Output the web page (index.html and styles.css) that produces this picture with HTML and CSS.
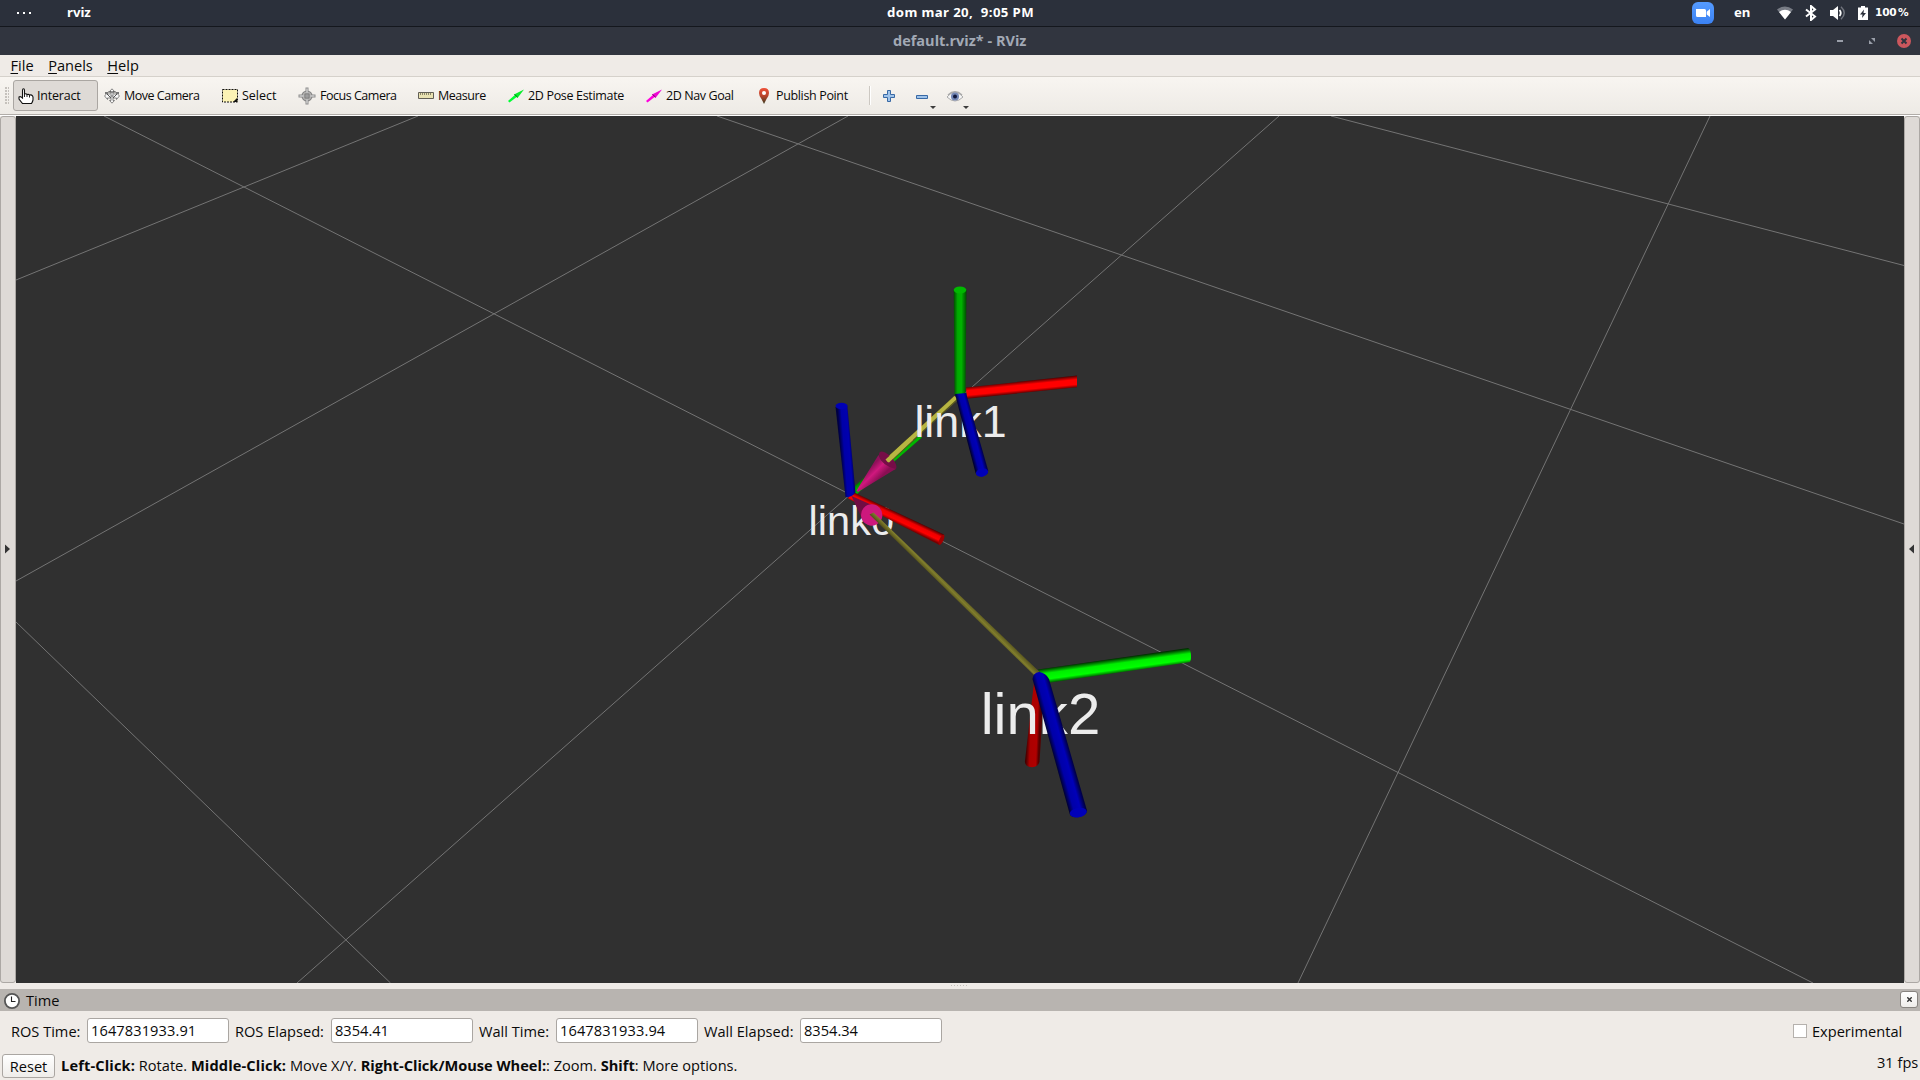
FILE: index.html
```
<!DOCTYPE html>
<html lang="en">
<head>
<meta charset="utf-8">
<title>default.rviz* - RViz</title>
<link rel="stylesheet" href="styles.css">
</head>
<body>
<header class="topbar">
  <div class="top-left"><span class="dots"><i></i><i></i><i></i></span><span class="app">rviz</span></div>
  <div class="clock">dom mar 20,&nbsp; 9:05 PM</div>
  <div class="tray">
    <svg class="zoom-app" width="22" height="22" viewBox="0 0 22 22"><defs><linearGradient id="zm" x2="0" y2="1"><stop stop-color="#559bff"/><stop offset="1" stop-color="#3b82f4"/></linearGradient></defs><rect width="22" height="22" rx="6" fill="url(#zm)"/><path d="M4 7h8.500q1.500 0 1.500 1.500V15H5.500Q4 15 4 13.500zM14.700 9.700L18 7v8l-3.300-2.500z" fill="#fff"/></svg>
    <span class="lang">en</span>
    <svg class="wifi" width="16" height="14" viewBox="0 0 16 14"><path d="M0 3.500Q8-2.500 16 3.500L8 13.500z" fill="#777b84"/><path d="M2 6Q8 1.500 14 6L8 13.500z" fill="#fff"/></svg>
    <svg class="bt" width="12" height="16" viewBox="0 0 12 16"><path d="M1 4.500l9 7L6 15V1l4 3.500-9 7" fill="none" stroke="#fff" stroke-width="2"/></svg>
    <svg class="vol" width="16" height="14" viewBox="0 0 16 14"><path d="M0 4h3l5-4v14l-5-4H0z" fill="#fff"/><path d="M9.500 4q2.500 3 0 6" fill="none" stroke="#fff" stroke-width="1.800"/><path d="M11 .8q6.500 6.200 0 12.400" fill="none" stroke="#70747d" stroke-width="1.500"/></svg>
    <svg class="bat" width="10" height="14" viewBox="0 0 10 14"><path d="M3 0h4v1.500h3V14H0V1.500h3z" fill="#fff"/><path d="M6 3.500L2 8.500h2.500L4 12l4-5H5.500z" fill="#2b303b"/></svg>
    <span class="percent">100 %</span>
  </div>
</header>
<div class="titlebar">
  <div></div>
  <div class="title">default.rviz* - RViz</div>
  <div class="controls">
    <svg width="6" height="14" viewBox="0 0 6 14"><path d="M0 6h6v2H0z" fill="#9a9fa9"/></svg>
    <svg width="6" height="14" viewBox="0 0 6 14"><path d="M2 4h4v4zM0 6l4 4H0z" fill="#9a9fa9"/></svg>
    <svg width="14" height="14" viewBox="0 0 14 14"><circle cx="7" cy="7" r="7" fill="#cc575d"/><path d="M4.500 4.500l5 5m0-5l-5 5" stroke="#2f343f" stroke-width="2"/></svg>
  </div>
</div>
<nav class="menubar"><span><u>F</u>ile</span><span><u>P</u>anels</span><span><u>H</u>elp</span></nav>
<div class="toolbar">
  <span class="grip"></span>
  <div class="tool interact active"><svg width="16" height="16" viewBox="0 0 16 16"><path d="M4.500 10V2.500q0-1.800 1-1.800t1 1.800V6q1.800-.8 2.500.5 1.800-.5 2.500.5 2-.5 3 .8L15 9v3q-.5 2-1.500 3.500H4.500L1 11V9q1.500-1 3.500 1z" fill="#fff" stroke="#111" stroke-width="1.100"/><path d="M6.500 6v3M9 6.500V9M11.500 7v2.500" stroke="#222"/></svg><span>Interact</span></div>
  <div class="tool move"><svg width="16" height="16" viewBox="0 0 16 16"><path d="M8 .8L5.500 3.500H7V6H3.500V4.500L.6 8l2.900 3.500V10H7v2.500H5.500L8 15.200l2.500-2.700H9V10h3.500v1.500L15.400 8l-2.900-3.500V6H9V3.500h1.500z" fill="#f8f8f8" stroke="#777" stroke-width=".9"/><path d="M2 5l5 5M14 5l-5 5M4 4h8" stroke="#444" stroke-width=".9"/><circle cx="8" cy="8" r="1.800" fill="#999"/><path d="M1 4h3v2H1zm11 0h3v2h-3z" fill="#777"/></svg><span>Move Camera</span></div>
  <div class="tool select"><svg width="16" height="14" viewBox="0 0 16 14"><path d="M.5.5h15v12.500H.5z" fill="#fcf3b5" stroke="#111" stroke-dasharray="2 1"/><path d="M15 9v4h-4z" fill="#111"/></svg><span>Select</span></div>
  <div class="tool focus"><svg width="18" height="18" viewBox="0 0 18 18"><circle cx="9" cy="9" r="4.800" fill="none" stroke="#888" stroke-width="1.600"/><path d="M9 .5v17M.5 9h17" stroke="#8c8c8c" stroke-width="3"/><path d="M9 1.500v15M1.500 9h15" stroke="#eee"/><path d="M6 7h6M6 9h6M6 11h6M7 6v6M9 6v6M11 6v6" stroke="#777" stroke-width=".7"/></svg><span>Focus Camera</span></div>
  <div class="tool measure"><svg width="16" height="7" viewBox="0 0 16 7"><path d="M.5.5h15v6H.5z" fill="#e9e2b2" stroke="#625f55"/><path d="M2.500 1v2M4.500 1v2M6.500 1v2M8.500 1v2M10.500 1v2M12.500 1v2" stroke="#8a8569"/></svg><span>Measure</span></div>
  <div class="tool pose"><svg width="16" height="14" viewBox="0 0 16 14"><path d="M0 12L8 5l2 2-8.500 6.500z" fill="#0f3"/><path d="M6 5.500L16 .5 9.500 9z" fill="#08ed2c"/><path d="M6.500 5.500l3 2.500" stroke="#067318"/></svg><span>2D Pose Estimate</span></div>
  <div class="tool nav"><svg width="16" height="14" viewBox="0 0 16 14"><path d="M0 12L8 5l2 2-8.500 6.500z" fill="#f0d"/><path d="M6 5.500L16 .5 9.500 9z" fill="#ed08d2"/><path d="M6.500 5.500l3 2.500" stroke="#780668"/></svg><span>2D Nav Goal</span></div>
  <div class="tool publish"><svg width="16" height="16" viewBox="0 0 16 16"><defs><linearGradient id="pin" x2="0" y2="1"><stop stop-color="#ef5138"/><stop offset=".5" stop-color="#b8442c"/><stop offset="1" stop-color="#383c20"/></linearGradient></defs><path d="M8 0q5 0 5 5 0 3-2.500 6L8 16 5.500 11Q3 8 3 5q0-5 5-5z" fill="url(#pin)"/><circle cx="8" cy="5" r="2" fill="#fff"/></svg><span>Publish Point</span></div>
  <span class="sep"></span>
  <svg class="plus" width="12" height="12" viewBox="0 0 12 12"><path d="M4.500.5h3v4h4v3h-4v4h-3v-4h-4v-3h4z" fill="#9fc3ea" stroke="#3869a5"/></svg>
  <svg class="minus" width="21" height="16" viewBox="0 0 21 16"><path d="M.5 2.500h11v3H.5z" fill="#9fc3ea" stroke="#3869a5"/><path d="M14 13h6l-3 3z" fill="#3c3c3c"/></svg>
  <svg class="eye" width="22" height="20" viewBox="0 0 22 20"><path d="M0 8Q8-2 16 8 8 16 0 8z" fill="#f5f5f5" stroke="#aaa"/><path d="M1 6Q8-.5 15 6" fill="none" stroke="#aaa" stroke-width="1.500"/><circle cx="8" cy="7.500" r="4" fill="#7387b5"/><circle cx="8" cy="7.500" r="2" fill="#10183c"/><path d="M16 17h6l-3 3z" fill="#3c3c3c"/></svg>
</div>
<main class="workspace">
  <div class="side left"><svg width="5" height="10" viewBox="0 0 5 10"><path d="M0 .5L5 5 0 9.500z" fill="#333"/></svg></div>
  <svg class="scene" width="1888" height="867" viewBox="16 116 1888 867">
    <defs>
      <linearGradient id="green" x2="1" y2="0"><stop stop-color="#004a00"/><stop offset=".3" stop-color="#00a800"/><stop offset=".6" stop-color="#00b400"/><stop offset="1" stop-color="#004a00"/></linearGradient>
      <linearGradient id="blue1" gradientUnits="userSpaceOnUse" x1="965.800" y1="434.500" x2="977" y2="431.500"><stop stop-color="#000030"/><stop offset=".3" stop-color="#0000a8"/><stop offset=".7" stop-color="#0000b8"/><stop offset="1" stop-color="#000050"/></linearGradient>
      <linearGradient id="blue0" gradientUnits="userSpaceOnUse" x1="840.500" y1="451.500" x2="853.500" y2="450.500"><stop stop-color="#000040"/><stop offset=".3" stop-color="#0000a8"/><stop offset=".7" stop-color="#0000b0"/><stop offset="1" stop-color="#000040"/></linearGradient>
      <linearGradient id="blue2" gradientUnits="userSpaceOnUse" x1="1051" y1="747" x2="1067" y2="742.500"><stop stop-color="#000030"/><stop offset=".3" stop-color="#0000a8"/><stop offset=".7" stop-color="#0000b8"/><stop offset="1" stop-color="#000048"/></linearGradient>
      <linearGradient id="red1" gradientUnits="userSpaceOnUse" x1="1020" y1="381" x2="1021.200" y2="393"><stop stop-color="#400"/><stop offset=".35" stop-color="#f00"/><stop offset=".75" stop-color="#f00"/><stop offset="1" stop-color="#600"/></linearGradient>
      <linearGradient id="red0" gradientUnits="userSpaceOnUse" x1="898" y1="512.500" x2="893.500" y2="522"><stop stop-color="#400"/><stop offset=".35" stop-color="#e00"/><stop offset=".7" stop-color="#f00"/><stop offset="1" stop-color="#700"/></linearGradient>
      <linearGradient id="red2" gradientUnits="userSpaceOnUse" x1="1027.500" y1="718" x2="1040" y2="718.500"><stop stop-color="#400"/><stop offset=".3" stop-color="#a00"/><stop offset=".8" stop-color="#b00000"/><stop offset="1" stop-color="#500"/></linearGradient>
      <linearGradient id="green2" gradientUnits="userSpaceOnUse" x1="1116" y1="658.500" x2="1118" y2="673"><stop stop-color="#003000"/><stop offset=".35" stop-color="#0e0"/><stop offset=".75" stop-color="#0f0"/><stop offset="1" stop-color="#006000"/></linearGradient>
      <linearGradient id="green0" gradientUnits="userSpaceOnUse" x1="882" y1="460" x2="890" y2="469"><stop stop-color="#006000"/><stop offset=".4" stop-color="#00b000"/><stop offset=".75" stop-color="#00b800"/><stop offset="1" stop-color="#003000"/></linearGradient>
      <linearGradient id="cone" gradientUnits="userSpaceOnUse" x1="868" y1="470" x2="878" y2="480"><stop stop-color="#90105a"/><stop offset=".45" stop-color="#d0187e"/><stop offset="1" stop-color="#8a0e53"/></linearGradient>
      <linearGradient id="tail" gradientUnits="userSpaceOnUse" x1="951" y1="595" x2="956" y2="590"><stop stop-color="#58551c"/><stop offset=".5" stop-color="#807d2d"/><stop offset="1" stop-color="#605d20"/></linearGradient>
    </defs>
    <rect x="16" y="116" width="1888" height="867" fill="#303030"/>
    <g stroke="#747474" stroke-width="1">
      <path d="M104 116L1813 983M717 116L1904 524M1331 116L1904 265.500M16 622L390.500 983"/>
      <path d="M418 116L16 280M848 116L16 581M1279 116L297 983M1710 116L1298 983"/>
    </g>
    <path d="M850 490L914 434L922 437.500L857 494z" fill="url(#green0)"/>
    <g class="label"><text x="851.300" y="535" font-size="41.500">link0</text></g>
    <path d="M966 387.500L1077 375.500V387.300L967 398.700z" fill="url(#red1)"/>
    <path d="M954 396L884 460L889 463.500L959 399z" fill="#55541c"/><path d="M954.500 396L885 459.500L888.500 462.500L958 398z" fill="#b7b542"/>
    <path d="M1035 674L1024.900 761.500Q1025 767 1032 767.300Q1038.500 767 1039.500 761.500L1045 674z" fill="url(#red2)"/>
    <g class="label"><text x="960.500" y="437" font-size="44.800">link1</text><text x="1040.500" y="733.500" font-size="58.200">link2</text></g>
    <path d="M953.700 290H966.500L965.500 395H954.500z" fill="url(#green)"/><ellipse cx="960" cy="290" rx="6.300" ry="3.500" fill="#00b800"/>
    <path d="M955 394L975.500 473Q978 477 983 476.500Q988 475 988.200 470.500L966 393z" fill="url(#blue1)"/><ellipse cx="982" cy="472.500" rx="6.200" ry="4" transform="rotate(-12 982 472.500)" fill="#0000b8"/>
    <path d="M852 491.500L944 534.500L939.500 545L848 498.500z" fill="url(#red0)"/><ellipse cx="941.500" cy="539.800" rx="2" ry="5.500" transform="rotate(25 941.500 539.800)" fill="#a00000"/>
    <path d="M835.500 407L847.300 405.500L855.500 492.500Q851 498 845.500 497z" fill="url(#blue0)"/><ellipse cx="841.500" cy="406" rx="6" ry="3.300" fill="#0000b5"/>
    <ellipse cx="887.700" cy="460.700" rx="11.600" ry="5" transform="rotate(47 887.700 460.700)" fill="#760d47"/>
    <path d="M856.500 490.500L878.500 455Q882 466 895.500 469L858 492z" fill="url(#cone)"/>
    <path d="M910 437L885.500 459.500Q887.500 462.500 889 462.500L913 440z" fill="#b7b542"/>
    <path d="M851.500 496L881 509L864 523z" fill="#700c43"/><circle cx="871.700" cy="515" r="10.700" fill="#cd187d"/>
    <path d="M869.500 514.500L873.500 512.500L1039.500 672L1034 675z" fill="url(#tail)"/>
    <path d="M1038 669.500L1188 648Q1190.500 648.500 1191 655 1191.300 661 1189.500 662.300L1049 682.700z" fill="url(#green2)"/>
    <path d="M1032.500 679Q1033 673 1039 672Q1046 673 1049 679L1087 810.500Q1086.500 816 1078 817.500Q1071 817.500 1069.700 814z" fill="url(#blue2)"/><ellipse cx="1078.300" cy="812.500" rx="8.600" ry="4.600" transform="rotate(-10 1078.300 812.500)" fill="#0000b8"/>
  </svg>
  <div class="side right"><svg width="5" height="10" viewBox="0 0 5 10"><path d="M5 .5L0 5l5 4.500z" fill="#333"/></svg></div>
</main>
<div class="splitter"><span></span></div>
<div class="dock-title">
  <svg width="16" height="16" viewBox="0 0 16 16"><circle cx="8" cy="8" r="7.100" fill="#fff" stroke="#555" stroke-width="1.800"/><path d="M7.500 3.500v5h4" fill="none" stroke="#222" stroke-width="1.100"/></svg>
  <span class="dock-name">Time</span><button class="close"><svg width="5" height="5" viewBox="0 0 5 5"><path d="M.3.3l4.400 4.400m0-4.400L.3 4.700" stroke="#333" stroke-width="1.400"/></svg></button>
</div>
<div class="times">
  <label class="l1">ROS Time:</label><input value="1647831933.91">
  <label class="l2">ROS Elapsed:</label><input value="8354.41">
  <label class="l3">Wall Time:</label><input value="1647831933.94">
  <label class="l4">Wall Elapsed:</label><input value="8354.34">
  <span class="check"></span><span class="experimental">Experimental</span>
</div>
<footer class="status">
  <button class="reset">Reset</button>
  <p><b>Left-Click:</b> Rotate. <b>Middle-Click:</b> Move X/Y. <b>Right-Click/Mouse Wheel:</b>: Zoom. <b>Shift</b>: More options.</p>
  <span class="fps">31 fps</span>
</footer>
</body>
</html>
```
FILE: styles.css
```
* { box-sizing: border-box; }
body { margin: 0; width: 1920px; height: 1080px; overflow: hidden; display: flex; flex-direction: column; background: #efebe7; color: #0a0a0a; font: 14.6px/20px "Open Sans", "Noto Sans", sans-serif; white-space: nowrap; }
svg { display: block; flex: none; }
.topbar { height: 27px; flex: none; display: grid; grid-template-columns: 1fr auto 1fr; background: #2b303b; border-bottom: 1px solid #14171d; color: #fff; font: bold 13.2px/25px "Noto Sans", sans-serif; }
.top-left { display: flex; align-items: center; padding-left: 17px; }
.dots { display: flex; gap: 4px; width: 50px; }
.dots i { width: 2px; height: 2px; background: #fff; }
.app { margin-top: -1px; }
.clock { width: 146px; letter-spacing: .4px; }
.tray { display: flex; align-items: center; justify-content: flex-end; padding-right: 11px; }
.lang { width: 43px; margin: -1px 0 0 20px; }
.bt { margin-left: 12px; }
.vol { margin-left: 13px; }
.bat { margin-left: 12px; }
.percent { margin: -2px 0 0 7px; width: 34px; font: bold 10.6px/25px "DejaVu Sans", sans-serif; word-spacing: -2px; letter-spacing: -.2px; }
.titlebar { height: 28px; flex: none; display: grid; grid-template-columns: 1fr auto 1fr; align-items: center; background: #31353f; }
.title { color: #a2a9b5; font-weight: bold; width: 134px; font-size: 14.5px; font-stretch: 93%; }
.controls { display: flex; justify-content: flex-end; gap: 26px; padding-right: 9px; }
.controls svg:last-child { margin-left: -4px; }
.menubar { height: 22px; flex: none; display: flex; gap: 14.5px; padding-left: 10.5px; border-bottom: 1px solid #d5d1cb; line-height: 20px; }
.menubar u { text-underline-offset: 2px; }
.toolbar { height: 39px; flex: none; display: flex; align-items: center; padding: 0 0 1px 5px; background: linear-gradient(#f8f5f1, #edeae5); border-bottom: 1px solid #fff; box-shadow: inset 0 -1px #b1ada8; font-size: 12.5px; }
.grip { width: 4px; height: 17px; margin-right: 4px; background: radial-gradient(circle at 1px 1px, #c4c0bb .7px, transparent 1px) 0 0 / 3px 3px; }
.tool { display: flex; align-items: center; gap: 4px; height: 31px; padding-left: 3px; margin-right: 2px; border: 1px solid transparent; }
.tool span { padding-top: 1px; }
.active { background: #dedad6; border-color: #aaa6a2; border-radius: 3px; padding-left: 4px; gap: 3px; }
.interact { width: 85px; letter-spacing: -.2px; }
.move { width: 116px; letter-spacing: -.48px; }
.select { width: 75px; }
.focus { width: 117px; letter-spacing: -.48px; }
.focus span { padding-left: 1px; }
.focus svg { margin: 0 -1px; }
.measure { width: 88px; letter-spacing: -.45px; }
.pose { width: 136px; letter-spacing: -.33px; }
.nav { width: 108px; letter-spacing: -.4px; }
.publish { width: 115px; letter-spacing: -.35px; }
.sep { width: 2px; height: 19px; border-left: 1px solid #ccc8c2; border-right: 1px solid #fff; }
.plus { margin-left: 12px; }
.minus { margin: 10px 0 0 21px; }
.eye { margin: 6px 0 0 10px; }
.workspace { height: 867px; flex: none; display: grid; grid-template-columns: 16px 1888px 16px; }
.side { background: #dedad6; border: 1px solid #aca8a4; border-radius: 3px; display: flex; align-items: center; padding-left: 4px; }
.side svg { margin-top: -1px; }
.label { font-family: "Liberation Sans", Arial, sans-serif; fill: #ececec; text-anchor: middle; }
.splitter { height: 6px; flex: none; display: flex; justify-content: center; padding-top: 2px; }
.splitter span { width: 18px; height: 1px; background: repeating-linear-gradient(90deg, #c4c0bb 0 1px, transparent 1px 3px); }
.dock-title { height: 22px; flex: none; display: flex; align-items: center; padding: 1px 2px 0 4px; background: #b8b4b0; }
.dock-name { flex: 1; padding-left: 6px; margin-top: -2px; }
button { font: inherit; padding: 0; color: inherit; background: linear-gradient(#fff, #efedea); border: 1px solid #aaa6a2; border-radius: 3px; display: flex; align-items: center; justify-content: center; }
.close { width: 18px; height: 17px; margin-top: -3px; border-color: #888480; }
.times { height: 41px; flex: none; display: flex; align-items: center; padding-left: 11px; }
label { margin-top: -2px; }
.l1 { width: 76px; }
.l2 { width: 96px; margin-left: 6px; }
.l3 { width: 77px; margin-left: 6px; }
.l4 { width: 96px; margin-left: 6px; }
input { width: 142px; height: 25px; margin: 0; margin-top: -2px; padding: 0 3px 1px; border: 1px solid #aaa6a2; border-radius: 3px; background: #fff; font: inherit; color: inherit; }
.l1 + input, .l3 + input { letter-spacing: .1px; }
.check { width: 14px; height: 14px; margin: -1px 0 0 auto; border: 1px solid #b5b1ad; background: #fff; }
.experimental { width: 92px; margin: -2px 16px 0 5px; }
.status { height: 28px; flex: none; display: flex; align-items: flex-start; padding-left: 2px; }
.reset { width: 53px; height: 24px; margin-top: 2px; }
.status p { margin: 3px 0 0 6px; flex: 1; }
.status b { font-stretch: 88%; }
.status b:nth-of-type(-n+2) { letter-spacing: .14px; }
.fps { width: 43px; margin: 0; }
```
